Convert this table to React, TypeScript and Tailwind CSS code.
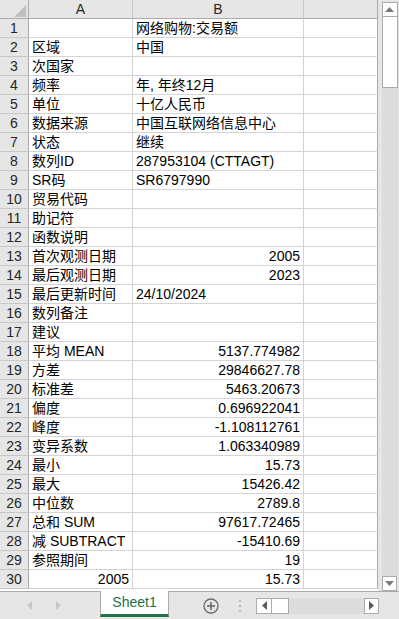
import React from "react";

type Row = { a?: string; b?: string; ar?: boolean; br?: boolean };

const ROWS: Row[] = [
  { b: "网络购物:交易额" },
  { a: "区域", b: "中国" },
  { a: "次国家" },
  { a: "频率", b: "年, 年终12月" },
  { a: "单位", b: "十亿人民币" },
  { a: "数据来源", b: "中国互联网络信息中心" },
  { a: "状态", b: "继续" },
  { a: "数列ID", b: "287953104 (CTTAGT)" },
  { a: "SR码", b: "SR6797990" },
  { a: "贸易代码" },
  { a: "助记符" },
  { a: "函数说明" },
  { a: "首次观测日期", b: "2005", br: true },
  { a: "最后观测日期", b: "2023", br: true },
  { a: "最后更新时间", b: "24/10/2024" },
  { a: "数列备注" },
  { a: "建议" },
  { a: "平均 MEAN", b: "5137.774982", br: true },
  { a: "方差", b: "29846627.78", br: true },
  { a: "标准差", b: "5463.20673", br: true },
  { a: "偏度", b: "0.696922041", br: true },
  { a: "峰度", b: "-1.108112761", br: true },
  { a: "变异系数", b: "1.063340989", br: true },
  { a: "最小", b: "15.73", br: true },
  { a: "最大", b: "15426.42", br: true },
  { a: "中位数", b: "2789.8", br: true },
  { a: "总和 SUM", b: "97617.72465", br: true },
  { a: "减 SUBTRACT", b: "-15410.69", br: true },
  { a: "参照期间", b: "19", br: true },
  { a: "2005", b: "15.73", ar: true, br: true },
];

const font = { fontFamily: '"Liberation Sans", "Noto Sans CJK SC", sans-serif' };

const cell = "h-[19px] border-r border-b border-[#d4d4d4] flex items-end pb-[0px] px-[3px] text-[14px] leading-[18px] text-black whitespace-nowrap overflow-visible";

function Triangle({ dir, cls }: { dir: "up" | "down" | "left" | "right"; cls: string }) {
  const pts = {
    up: "0,5 4.5,0 9,5",
    down: "0,0 9,0 4.5,5",
    left: "5,0 5,9 0,4.5",
    right: "0,0 0,9 5,4.5",
  }[dir];
  const size = dir === "up" || dir === "down" ? { w: 9, h: 5 } : { w: 5, h: 9 };
  return (
    <svg width={size.w} height={size.h} viewBox={`0 0 ${size.w} ${size.h}`} className={cls}>
      <polygon points={pts} />
    </svg>
  );
}

export default function App() {
  return (
    <div className="w-[399px] h-[619px] bg-[#e6e6e6] overflow-hidden flex flex-col select-none" style={font}>
      <div className="h-[591px] flex">
        {/* grid */}
        <div className="w-[378px] bg-white">
          <div className="grid grid-cols-[29px_104px_171px_74px]">
            {/* header row */}
            <div className="h-[19px] bg-[#e6e6e6] border-r border-b border-[#ababab] relative">
              <svg width="12" height="12" viewBox="0 0 12 12" className="absolute left-[14px] top-[5px] fill-[#bfbfbf]">
                <polygon points="12,0 12,12 0,12" />
              </svg>
            </div>
            <div className="h-[19px] bg-[#e6e6e6] border-r border-b border-r-[#c8c8c8] border-b-[#ababab] flex items-center justify-center text-[14px] text-[#262626]">A</div>
            <div className="h-[19px] bg-[#e6e6e6] border-r border-b border-r-[#c8c8c8] border-b-[#ababab] flex items-center justify-center text-[14px] text-[#262626]">B</div>
            <div className="h-[19px] bg-[#e6e6e6] border-r border-b border-r-[#ababab] border-b-[#ababab]"></div>

            {ROWS.map((r, i) => (
              <React.Fragment key={i}>
                <div className="h-[19px] bg-[#e6e6e6] border-r border-b border-r-[#ababab] border-b-[#c8c8c8] flex items-center justify-center text-[14px] text-[#262626]">
                  {i + 1}
                </div>
                <div className={`${cell} ${r.ar ? "justify-end" : ""}`}>{r.a ?? ""}</div>
                <div className={`${cell} ${r.br ? "justify-end" : ""}`}>{r.b ?? ""}</div>
                <div className="h-[19px] border-r border-b border-r-[#ababab] border-b-[#d4d4d4]"></div>
              </React.Fragment>
            ))}
          </div>
        </div>

        {/* vertical scrollbar */}
        <div className="w-[21px] flex flex-col items-center pt-[2px] pb-0 pl-[2px] bg-[#e6e6e6]">
          <div className="w-[16px] h-[15px] bg-white border border-[#ababab] flex items-center justify-center">
            <Triangle dir="up" cls="fill-[#7a7a7a]" />
          </div>
          <div className="w-[16px] h-[71px] bg-white border border-[#ababab] border-t-0"></div>
          <div className="flex-1 w-[16px] bg-[#dcdcdc]"></div>
          <div className="w-[15px] h-[15px] bg-white border border-[#ababab] flex items-center justify-center mb-0">
            <Triangle dir="down" cls="fill-[#7a7a7a]" />
          </div>
        </div>
      </div>

      {/* tab bar */}
      <div className="h-[28px] flex items-start border-t border-[#ababab] relative">
        <div className="w-[100px] h-full flex items-center">
          <div className="ml-[27px]"><Triangle dir="left" cls="fill-[#c6c6c6]" /></div>
          <div className="ml-[24px]"><Triangle dir="right" cls="fill-[#c6c6c6]" /></div>
        </div>
        <div className="w-[69px] h-[26px] -mt-[1px] bg-white border-x border-[#ababab] border-b-[3px] border-b-[#217346] flex items-center justify-center text-[14px] text-[#217346]">
          Sheet1
        </div>
        <div className="h-full flex items-center pl-[34px]">
          <svg width="16" height="16" viewBox="0 0 16 16" className="stroke-[#6b6b6b]" fill="none">
            <circle cx="8" cy="8" r="7" strokeWidth="1.3" />
            <line x1="8" y1="4" x2="8" y2="12" strokeWidth="1.6" />
            <line x1="4" y1="8" x2="12" y2="8" strokeWidth="1.6" />
          </svg>
          <div className="ml-[20px] flex flex-col gap-[3px]">
            <div className="w-[2px] h-[2px] bg-[#bdbdbd]"></div>
            <div className="w-[2px] h-[2px] bg-[#bdbdbd]"></div>
            <div className="w-[2px] h-[2px] bg-[#bdbdbd]"></div>
          </div>
          <div className="ml-[15px] flex h-[16px]">
            <div className="w-[16px] h-[16px] bg-white border border-[#ababab] flex items-center justify-center">
              <Triangle dir="left" cls="fill-[#5a5a5a]" />
            </div>
            <div className="w-[17px] h-[16px] bg-white border border-[#ababab] border-l-0"></div>
            <div className="w-[75px] h-[16px] bg-[#dcdcdc]"></div>
            <div className="w-[15px] h-[16px] bg-white border border-[#ababab] flex items-center justify-center">
              <Triangle dir="right" cls="fill-[#5a5a5a]" />
            </div>
          </div>
        </div>
      </div>
    </div>
  );
}
